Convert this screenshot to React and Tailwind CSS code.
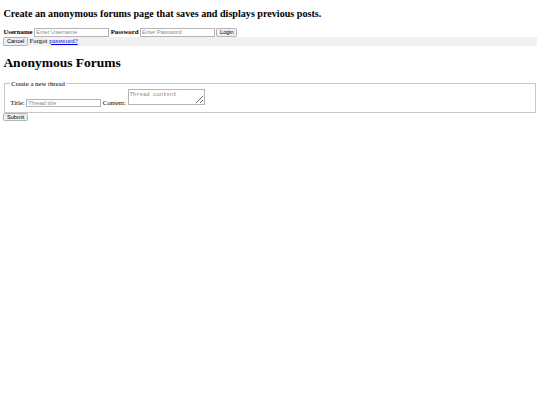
export default function App() {
  const input =
    "w-[177px] h-[21px] px-[2px] py-[1px] border-[2px] border-[#b4b4b4] bg-white text-[13.33px] font-['Liberation_Sans',Arial,sans-serif] align-baseline placeholder:text-[#8a8a8a]";
  const btn =
    "h-[21px] px-[6px] py-[1px] border-[2px] border-[#b4b4b4] rounded-[3px] bg-[#efefef] text-[13.33px] font-['Liberation_Sans',Arial,sans-serif] text-black leading-[normal]";

  return (
    <div className="[zoom:0.421875] min-h-screen bg-white text-black text-[16px] leading-[normal] font-['Liberation_Serif','Times_New_Roman',serif]">
      <div className="px-[8px] pb-[8px]">
        <h2 className="text-[24px] font-bold my-[19.92px] leading-[normal]">
          Create an anonymous forums page that saves and displays previous posts.
        </h2>

        {/* login row */}
        <div>
          <b>Username</b>{" "}
          <input type="text" placeholder="Enter Username" className={input} />{" "}
          <b>Password</b>{" "}
          <input type="password" placeholder="Enter Password" className={input} />{" "}
          <button className={btn}>Login</button>
        </div>
        <div className="bg-[#f1f1f1]">
          <button className={btn}>Cancel</button>{" "}
          <span>
            Forgot <a href="#" className="text-[#0000ee] underline">password?</a>
          </span>
        </div>

        <h1 className="text-[32px] font-bold my-[21.44px] leading-[normal]">Anonymous Forums</h1>

        <fieldset className="mx-[2px] px-[12px] pt-[5.6px] pb-[10px] border-[2px] [border-style:groove] border-[#c8c8c8]">
          <legend className="px-[2px]">Create a new thread</legend>
          <label>Title:</label>{" "}
          <input type="text" placeholder="Thread title" className={input} />{" "}
          <label>Content:</label>{" "}
          <textarea
            rows={2}
            placeholder="Thread content"
            className="w-[183px] h-[38px] px-[2px] py-[2px] border-[2px] border-[#b4b4b4] bg-white text-[13.33px] font-['Liberation_Mono','Courier_New',monospace] align-baseline placeholder:text-[#8a8a8a] resize"
          />
        </fieldset>
        <button className={btn}>Submit</button>
      </div>
    </div>
  );
}
